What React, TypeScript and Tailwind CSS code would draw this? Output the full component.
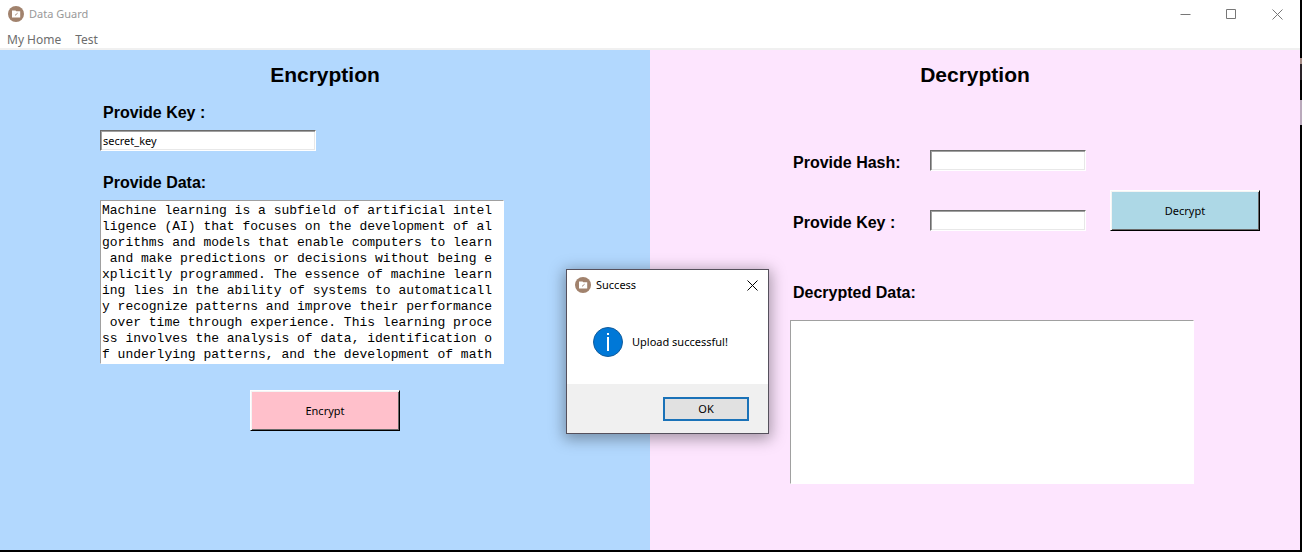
import { useState, type ButtonHTMLAttributes, type ReactNode } from 'react';

const SAMPLE = [
  'Machine learning is a subfield of artificial intel',
  'ligence (AI) that focuses on the development of al',
  'gorithms and models that enable computers to learn',
  ' and make predictions or decisions without being e',
  'xplicitly programmed. The essence of machine learn',
  'ing lies in the ability of systems to automaticall',
  'y recognize patterns and improve their performance',
  ' over time through experience. This learning proce',
  'ss involves the analysis of data, identification o',
  'f underlying patterns, and the development of math',
].join('\n');

const FIELD =
  'block h-[21px] rounded-none border border-t-[#6b6b6b] border-l-[#6b6b6b] border-r-white border-b-white bg-white px-[2px] text-[11px] text-black outline-none shadow-[inset_1px_1px_0_#a0a0a0,inset_-1px_-1px_0_#e8e8e8]';

const AREA =
  "block h-[164px] w-[404px] resize-none overflow-hidden whitespace-pre rounded-none border border-t-[#a0a0a0] border-l-[#a0a0a0] border-r-white border-b-white bg-white px-px pt-[2px] font-['Liberation_Mono',monospace] text-[13px] leading-4 text-black outline-none";

const LABEL = "block pl-[3px] font-['Liberation_Sans',sans-serif] text-base leading-[26px] font-bold text-black";

function AppIcon() {
  return (
    <svg className="size-4 shrink-0" viewBox="0 0 16 16" aria-hidden="true">
      <circle cx="8" cy="8" r="8" fill="#a1826d" />
      <path d="M4 4.500h3.500l.8.700H12.200v6.300H4z" fill="#fff" />
      <path d="M7 9.400 9.600 7.200" stroke="#8a6b58" strokeWidth="0.8" fill="none" />
    </svg>
  );
}

function CloseGlyph() {
  return (
    <svg className="size-[11px]" viewBox="0 0 11 11" fill="none" stroke="currentColor" aria-hidden="true">
      <path d="M.5.5l10 10M10.5.5l-10 10" />
    </svg>
  );
}

function Heading({ children }: { children: ReactNode }) {
  return (
    <h1 className="text-center font-['Liberation_Sans',sans-serif] text-[21px] leading-[30px] font-bold text-black">
      {children}
    </h1>
  );
}

function RaisedButton({ className, ...rest }: ButtonHTMLAttributes<HTMLButtonElement>) {
  return (
    <button
      type="button"
      className={`h-[41px] w-[150px] border border-t-white border-l-white border-r-black border-b-black pt-px text-[11px] text-black shadow-[inset_1px_1px_0_#f4f4f4,inset_-1px_-1px_0_#696969] ${className}`}
      {...rest}
    />
  );
}

export default function App() {
  const [open, setOpen] = useState(true);
  return (
    <div className="relative flex min-h-screen bg-black pb-[2px] font-['Noto_Sans',sans-serif] text-xs">
      <div className="flex min-w-0 flex-1 flex-col bg-white">
        <header className="flex h-7 items-center pl-2">
          <AppIcon />
          <span className="ml-[5px] text-[11px] text-[#999]">Data Guard</span>
          <div className="ml-auto flex h-full text-[#777]">
            <button type="button" aria-label="Minimize" className="flex w-[46px] items-center justify-center">
              <svg className="size-[11px]" viewBox="0 0 11 11" stroke="currentColor" aria-hidden="true">
                <path d="M.5 5.500h10" />
              </svg>
            </button>
            <button type="button" aria-label="Maximize" className="flex w-[46px] items-center justify-center">
              <svg className="size-[11px]" viewBox="0 0 11 11" fill="none" stroke="currentColor" aria-hidden="true">
                <path d="M.5.5h9v9h-9z" />
              </svg>
            </button>
            <button type="button" aria-label="Close" className="flex w-[46px] items-center justify-center">
              <CloseGlyph />
            </button>
          </div>
        </header>
        <nav className="flex h-[22px] items-end gap-[14px] border-b-2 border-[#f0f0f0] pl-[7px] text-[#6d6d6d]">
          <button type="button">My Home</button>
          <button type="button">Test</button>
        </nav>
        <main className="grid flex-1 grid-cols-2">
          <section className="bg-[#b2d8fe] pt-[10px]">
            <Heading>Encryption</Heading>
            <form className="w-[504px] pt-[10px] pl-[100px]">
              <label htmlFor="enc-key" className={LABEL}>Provide Key :</label>
              <input id="enc-key" defaultValue="secret_key" className={`mt-1 w-[216px] ${FIELD}`} />
              <label htmlFor="enc-data" className={`mt-[19px] ${LABEL}`}>Provide Data:</label>
              <textarea id="enc-data" wrap="off" defaultValue={SAMPLE} spellCheck={false} className={`mt-1 ${AREA}`} />
              <RaisedButton className="mt-[26px] ml-[150px] bg-[#ffc0cb]">Encrypt</RaisedButton>
            </form>
          </section>
          <section className="bg-[#fde5fe] pt-[10px]">
            <Heading>Decryption</Heading>
            <form className="pt-[60px] pl-[140px]">
              <div className="flex items-end gap-6">
                <div className="grid grid-cols-[140px_156px] gap-y-[34px]">
                  <label htmlFor="dec-hash" className={LABEL}>Provide Hash:</label>
                  <input id="dec-hash" className={FIELD} />
                  <label htmlFor="dec-key" className={LABEL}>Provide Key :</label>
                  <input id="dec-key" className={FIELD} />
                </div>
                <RaisedButton className="mb-[5px] bg-[#add8e6]">Decrypt</RaisedButton>
              </div>
              <label htmlFor="dec-data" className={`mt-11 ${LABEL}`}>Decrypted Data:</label>
              <textarea id="dec-data" className={`mt-[14px] ${AREA}`} />
            </form>
          </section>
        </main>
      </div>
      <div className="flex w-[2px] flex-col pt-[58px]" aria-hidden="true">
        <div className="h-[6px] bg-[#a58b84]" />
        <div className="mb-5 h-4 bg-[#2a2328]" />
        <div className="h-[25px] bg-[#b9a9bb]" />
      </div>

      {open && (
        <div
          role="dialog"
          aria-labelledby="dialog-title"
          className="absolute top-[269px] left-[566px] flex h-[165px] w-[203px] flex-col border border-[#55505c] bg-white text-black shadow-[0_3px_14px_2px_rgba(0,0,0,0.35)]"
        >
          <div className="flex h-[30px] items-center pr-[10px] pl-2">
            <AppIcon />
            <h2 id="dialog-title" className="ml-[5px] text-[11px]">Success</h2>
            <button type="button" aria-label="Close dialog" className="ml-auto" onClick={() => setOpen(false)}>
              <CloseGlyph />
            </button>
          </div>
          <div className="flex flex-1 items-center gap-[9px] pl-[26px]">
            <svg className="size-[30px] shrink-0" viewBox="0 0 30 30" aria-hidden="true">
              <circle cx="15" cy="15" r="14.500" fill="#0078d7" stroke="#135c9b" />
              <path d="M14 6h2v2h-2zM14 10h2V24h-2z" fill="#fff" />
            </svg>
            <p className="text-[11px]">Upload successful!</p>
          </div>
          <div className="flex h-[49px] items-center justify-end bg-[#f0f0f0] pr-[19px]">
            <button
              type="button"
              onClick={() => setOpen(false)}
              className="h-6 w-[86px] border-2 border-[#1a72b8] bg-[#e1e1e1] text-[11px] leading-5"
            >
              OK
            </button>
          </div>
        </div>
      )}
    </div>
  );
}
